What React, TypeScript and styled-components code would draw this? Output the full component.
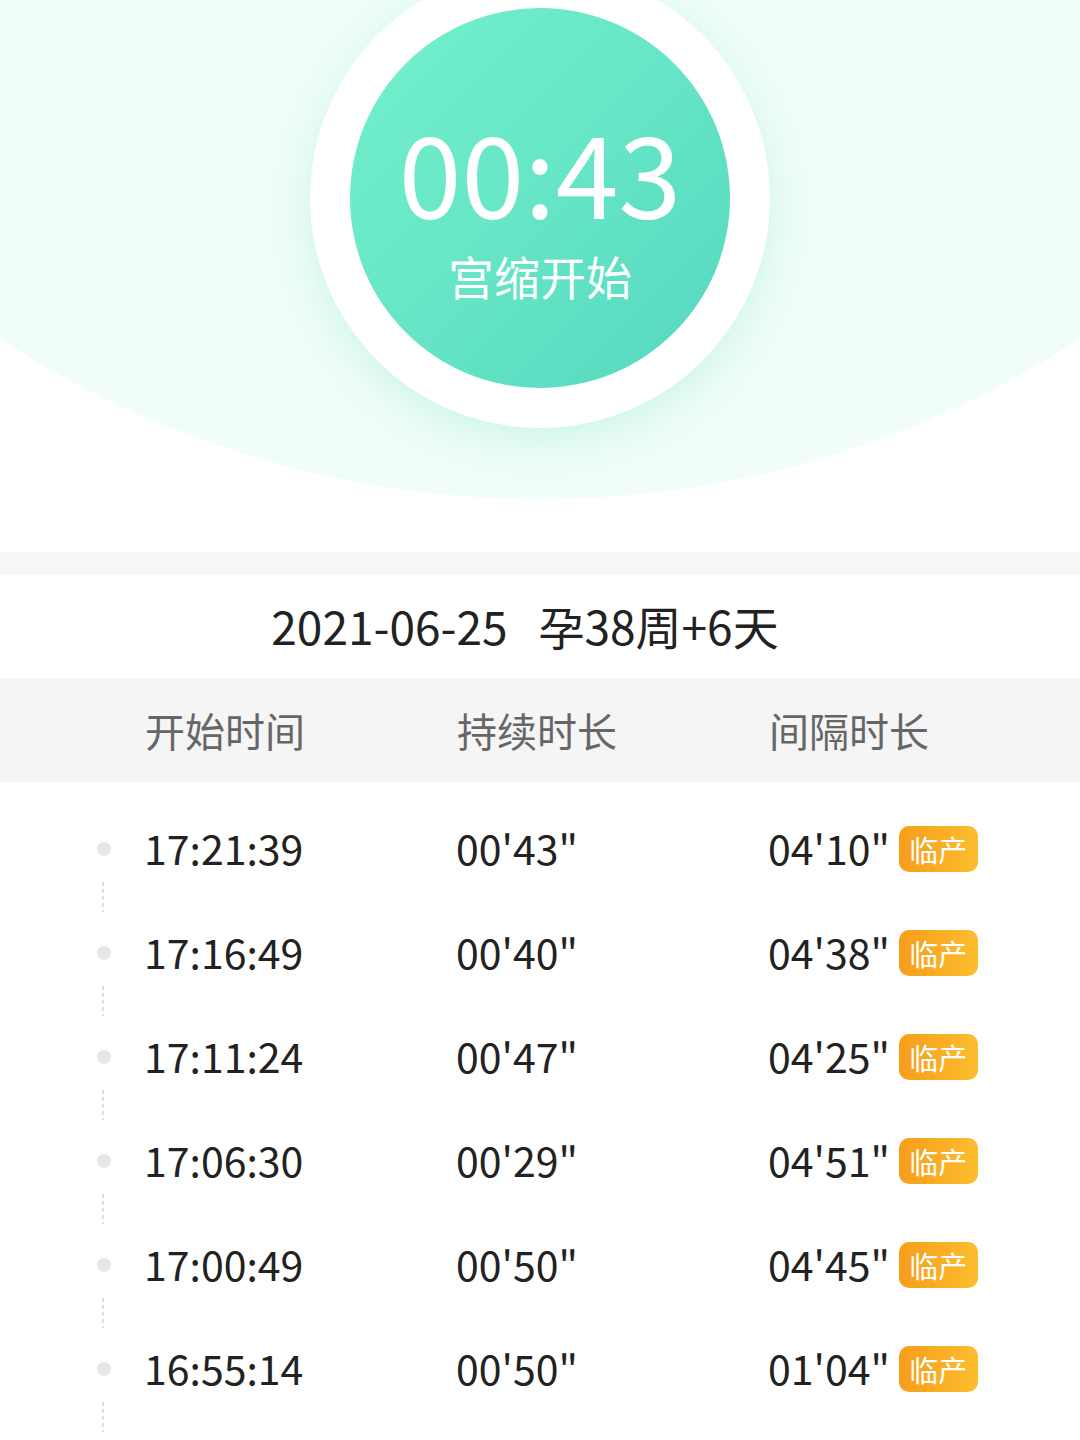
import React from 'react';
import styled, { createGlobalStyle } from 'styled-components';

const GlobalStyle = createGlobalStyle`
  html, body {
    margin: 0;
    padding: 0;
    background: #fff;
    font-family: "Noto Sans CJK SC", "Noto Sans", sans-serif;
  }
`;

const Page = styled.div`
  width: 1080px;
  min-height: 1440px;
  overflow: hidden;
  background: #fff;
`;

const Hero = styled.div`
  height: 552px;
  display: flex;
  justify-content: center;
  align-items: flex-start;
  overflow: hidden;
  background: radial-gradient(circle 991px at 540px -491px, #f0fdf9 99.8%, #ffffff 100%);
`;

const Ring = styled.div`
  width: 460px;
  height: 460px;
  flex-shrink: 0;
  margin-top: -32px;
  border-radius: 50%;
  background: #fff;
  box-shadow: 0 12px 40px rgba(86, 220, 190, 0.24);
  display: flex;
  align-items: center;
  justify-content: center;
`;

const Dial = styled.div`
  width: 380px;
  height: 380px;
  border-radius: 50%;
  background: linear-gradient(135deg, #74f0cb 0%, #66e6c6 50%, #56d6bf 100%);
  display: flex;
  flex-direction: column;
  align-items: center;
  box-sizing: border-box;
  padding-top: 106px;
  color: #fff;
`;

const Timer = styled.div`
  font-size: 113px;
  line-height: 1;
`;

const DialLabel = styled.div`
  margin-top: 25px;
  font-size: 46px;
  line-height: 1;
`;

const Band = styled.div`
  height: 23px;
  background: #f7f7f7;
`;

const DateRow = styled.div`
  height: 103px;
  box-sizing: border-box;
  padding: 0 30px 4px 0;
  display: flex;
  align-items: center;
  justify-content: center;
  font-size: 46px;
  color: #222;
  gap: 31px;
`;

const HeaderRow = styled.div`
  height: 104px;
  display: grid;
  grid-template-columns: 312px 312px 312px;
  padding-left: 145px;
  align-items: center;
  background: #f5f5f5;
  font-size: 40px;
  color: #666;
`;

const List = styled.div`
  padding-top: 13px;
`;

const Row = styled.div`
  height: 104px;
  display: flex;
  align-items: center;
`;

const MarkerCell = styled.div`
  width: 145px;
  padding: 3px 0 0 97px;
  box-sizing: border-box;
  display: flex;
  align-items: center;
`;

const Dot = styled.div`
  position: relative;
  width: 14px;
  height: 14px;
  border-radius: 50%;
  background: #e6e6e6;
  &::after {
    content: '';
    position: absolute;
    left: 5px;
    top: 40px;
    width: 2px;
    height: 30px;
    background: repeating-linear-gradient(to bottom, #dedede 0 4px, transparent 4px 7px);
  }
`;

const DataCols = styled.div`
  display: grid;
  grid-template-columns: 312px 312px 312px;
  align-items: center;
  font-size: 41px;
  color: #222;
`;

const Cell = styled.div`
  display: flex;
  align-items: center;
`;

const Badge = styled.span`
  margin-left: 9px;
  margin-top: 3px;
  width: 79px;
  height: 46px;
  border-radius: 10px;
  background: linear-gradient(90deg, #f79d1b 0%, #fdbd2e 100%);
  color: #fff;
  font-size: 29px;
  display: flex;
  align-items: center;
  justify-content: center;
`;

const records = [
  { start: '17:21:39', dur: `00'43"`, gap: `04'10"` },
  { start: '17:16:49', dur: `00'40"`, gap: `04'38"` },
  { start: '17:11:24', dur: `00'47"`, gap: `04'25"` },
  { start: '17:06:30', dur: `00'29"`, gap: `04'51"` },
  { start: '17:00:49', dur: `00'50"`, gap: `04'45"` },
  { start: '16:55:14', dur: `00'50"`, gap: `01'04"` },
];

export default function App() {
  return (
    <Page>
      <GlobalStyle />
      <Hero>
        <Ring>
          <Dial>
            <Timer>00:43</Timer>
            <DialLabel>宫缩开始</DialLabel>
          </Dial>
        </Ring>
      </Hero>
      <Band />
      <DateRow>
        <span>2021-06-25</span>
        <span>孕38周+6天</span>
      </DateRow>
      <HeaderRow>
        <span>开始时间</span>
        <span>持续时长</span>
        <span>间隔时长</span>
      </HeaderRow>
      <List>
        {records.map((r) => (
          <Row key={r.start}>
            <MarkerCell>
              <Dot />
            </MarkerCell>
            <DataCols>
              <Cell>{r.start}</Cell>
              <Cell>{r.dur}</Cell>
              <Cell>
                {r.gap}
                <Badge>临产</Badge>
              </Cell>
            </DataCols>
          </Row>
        ))}
      </List>
    </Page>
  );
}
